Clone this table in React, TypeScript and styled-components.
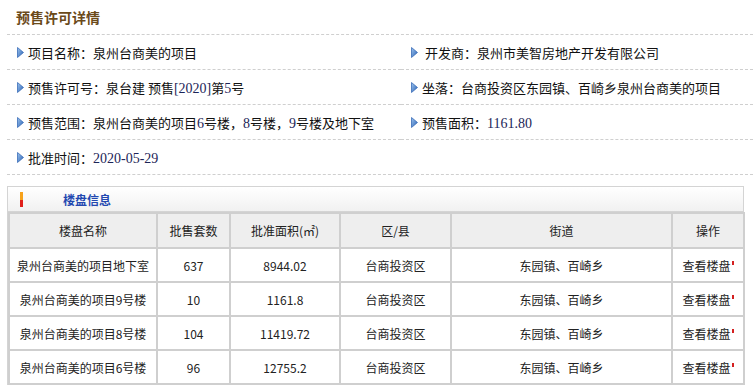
import styled, { createGlobalStyle } from "styled-components";

const GlobalStyle = createGlobalStyle`
    body {
        margin: 0;
        background: #fff;
        font-family: "Noto Sans CJK SC", "DejaVu Sans", sans-serif;
        color: #222;
    }
`;

const Page = styled.div`
    width: 753px;
    padding-left: 7px;
    box-sizing: border-box;
`;

const Title = styled.h2`
    margin: 0;
    height: 34px;
    line-height: 34px;
    padding-left: 9px;
    font-size: 14px;
    font-weight: bold;
    color: #6b4a1a;
    border-bottom: 1px dashed #cfcfcf;
`;

const InfoGrid = styled.div`
    display: grid;
    grid-template-columns: 394px 1fr;
`;

const InfoCell = styled.div`
    height: 34px;
    display: flex;
    align-items: center;
    gap: 4px;
    padding-left: 10px;
    font-size: 13px;
    color: #111;
    border-bottom: 1px dashed #cfcfcf;
`;

const Num = styled.span`
    font-family: "Liberation Serif", serif;
    font-size: 14px;
    color: #1c2558;
`;

const Panel = styled.div`
    margin-top: 11px;
    width: 737px;
    border: 1px solid #d4d4d4;
    border-bottom: none;
    box-sizing: border-box;
`;

const PanelHead = styled.div`
    height: 24px;
    display: flex;
    align-items: center;
    padding-left: 12px;
    background: linear-gradient(#ffffff, #f1f1f1);
    border-bottom: 1px solid #d4d4d4;
`;

const Marker = styled.span`
    width: 3px;
    height: 15px;
    background: linear-gradient(#f7a21b 50%, #e0201b 50%);
`;

const PanelTitle = styled.span`
    margin-left: 40px;
    font-size: 12px;
    font-weight: bold;
    color: #2348b0;
`;

const Table = styled.table`
    width: 100%;
    border-collapse: collapse;
    table-layout: fixed;
    font-size: 12px;
    color: #222;
`;

const Col = styled.col<{ $w: number }>`
    width: ${(p) => p.$w}px;
`;

const Th = styled.th`
    height: 33px;
    padding: 0;
    font-weight: normal;
    background: #eeeeee;
    border: 2px solid #cfcfcf;
    text-align: center;
`;

const Td = styled.td`
    height: 32px;
    padding: 0;
    border: 2px solid #cfcfcf;
    text-align: center;
    white-space: nowrap;
`;

const NewMark = styled.span`
    display: inline-block;
    width: 2px;
    height: 4px;
    margin-left: 1px;
    vertical-align: 6px;
    background: #d42020;
`;

const Arrow = () => (
    <svg width="7" height="11" viewBox="0 0 7 11">
        <defs>
            <linearGradient id="ag" x1="0" y1="0" x2="1" y2="1">
                <stop offset="0" stopColor="#9cc4ee" />
                <stop offset="1" stopColor="#2b62b4" />
            </linearGradient>
        </defs>
        <path d="M0.5 0.5 L6.5 5.5 L0.5 10.5 Z" fill="url(#ag)" stroke="#3a6cb8" strokeWidth="0.8" />
    </svg>
);

const rows = [
    ["泉州台商美的项目地下室", "637", "8944.02"],
    ["泉州台商美的项目9号楼", "10", "1161.8"],
    ["泉州台商美的项目8号楼", "104", "11419.72"],
    ["泉州台商美的项目6号楼", "96", "12755.2"],
];

export default function App() {
    return (
        <Page>
            <GlobalStyle />
            <Title>预售许可详情</Title>
            <InfoGrid>
                <InfoCell><Arrow /><span>项目名称：泉州台商美的项目</span></InfoCell>
                <InfoCell><Arrow /><span>&nbsp;开发商：泉州市美智房地产开发有限公司</span></InfoCell>
                <InfoCell><Arrow /><span>预售许可号：泉台建 预售<Num>[2020]</Num>第<Num>5</Num>号</span></InfoCell>
                <InfoCell><Arrow /><span>坐落：台商投资区东园镇、百崎乡泉州台商美的项目</span></InfoCell>
                <InfoCell><Arrow /><span>预售范围：泉州台商美的项目<Num>6</Num>号楼，<Num>8</Num>号楼，<Num>9</Num>号楼及地下室</span></InfoCell>
                <InfoCell><Arrow /><span>预售面积：<Num>1161.80</Num></span></InfoCell>
                <InfoCell><Arrow /><span>批准时间：<Num>2020-05-29</Num></span></InfoCell>
                <InfoCell />
            </InfoGrid>
            <Panel>
                <PanelHead>
                    <Marker />
                    <PanelTitle>楼盘信息</PanelTitle>
                </PanelHead>
                <Table>
                    <colgroup>
                        <Col $w={148} />
                        <Col $w={73} />
                        <Col $w={110} />
                        <Col $w={111} />
                        <Col $w={221} />
                        <Col $w={72} />
                    </colgroup>
                    <thead>
                        <tr>
                            <Th>楼盘名称</Th>
                            <Th>批售套数</Th>
                            <Th>批准面积(㎡)</Th>
                            <Th>区/县</Th>
                            <Th>街道</Th>
                            <Th>操作</Th>
                        </tr>
                    </thead>
                    <tbody>
                        {rows.map((r) => (
                            <tr key={r[0]}>
                                <Td>{r[0]}</Td>
                                <Td>{r[1]}</Td>
                                <Td>{r[2]}</Td>
                                <Td>台商投资区</Td>
                                <Td>东园镇、百崎乡</Td>
                                <Td>查看楼盘<NewMark /></Td>
                            </tr>
                        ))}
                    </tbody>
                </Table>
            </Panel>
        </Page>
    );
}
